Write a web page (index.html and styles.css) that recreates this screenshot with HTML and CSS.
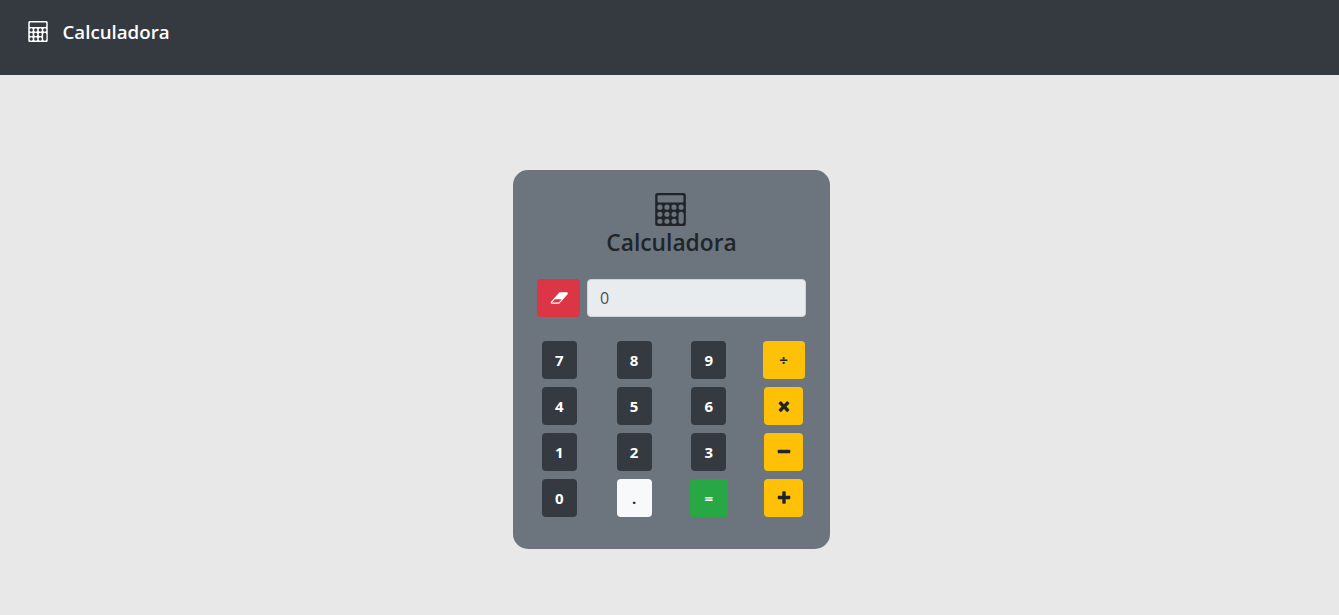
FILE: index.html
```html
<!DOCTYPE html>
<html lang="es">
<head>
<meta charset="utf-8">
<title>Calculadora</title>
<link rel="stylesheet" href="styles.css">
</head>
<body>
<svg class="sprite" aria-hidden="true">
  <symbol id="calculator" viewBox="0 0 1664 1792">
    <path fill-rule="evenodd" d="M128 0H1536a128 128 0 0 1 128 128V1664a128 128 0 0 1-128 128H128a128 128 0 0 1-128-128V128a128 128 0 0 1 128-128zM192 128a64 64 0 0 0-64 64V448a64 64 0 0 0 64 64H1472a64 64 0 0 0 64-64V192a64 64 0 0 0-64-64z
    M116 768a140 140 0 1 0 280 0a140 140 0 1 0-280 0zM500 768a140 140 0 1 0 280 0a140 140 0 1 0-280 0zM884 768a140 140 0 1 0 280 0a140 140 0 1 0-280 0zM1268 768a140 140 0 1 0 280 0a140 140 0 1 0-280 0z
    M116 1152a140 140 0 1 0 280 0a140 140 0 1 0-280 0zM500 1152a140 140 0 1 0 280 0a140 140 0 1 0-280 0zM884 1152a140 140 0 1 0 280 0a140 140 0 1 0-280 0z
    M116 1536a140 140 0 1 0 280 0a140 140 0 1 0-280 0zM500 1536a140 140 0 1 0 280 0a140 140 0 1 0-280 0zM884 1536a140 140 0 1 0 280 0a140 140 0 1 0-280 0z
    M1268 1152V1536a140 140 0 1 0 280 0V1152a140 140 0 1 0-280 0z"/>
  </symbol>
</svg>
<header class="navbar">
  <svg class="navbar-icon"><use href="#calculator"/></svg>
  <span class="navbar-title">Calculadora</span>
</header>
<main class="card">
  <svg class="card-icon"><use href="#calculator"/></svg>
  <h1 class="card-title">Calculadora</h1>
  <div class="display">
    <button class="btn clear" aria-label="Borrar">
      <svg class="eraser" viewBox="0 0 1984 1792"><path d="M960 1408l336-384h-768l-336 384h768zm1013-1077q15 34 9.500 71.500t-30.500 65.500l-896 1024q-38 44-96 44h-768q-38 0-69.500-20.500t-47.500-54.500q-15-34-9.500-71.500t30.500-65.500l896-1024q38-44 96-44h768q38 0 69.500 20.500t47.500 54.500z"/></svg>
    </button>
    <div class="screen">0</div>
  </div>
  <div class="keys">
    <button class="btn dark">7</button>
    <button class="btn dark">8</button>
    <button class="btn dark">9</button>
    <button class="btn operator divide">÷</button>
    <button class="btn dark">4</button>
    <button class="btn dark">5</button>
    <button class="btn dark">6</button>
    <button class="btn operator" aria-label="Multiplicar"><svg class="op-icon" viewBox="0 0 1792 1792"><path d="M1490 1322q0 40-28 68l-136 136q-28 28-68 28t-68-28l-294-294-294 294q-28 28-68 28t-68-28l-136-136q-28-28-28-68t28-68l294-294-294-294q-28-28-28-68t28-68l136-136q28-28 68-28t68 28l294 294 294-294q28-28 68-28t68 28l136 136q28 28 28 68t-28 68l-294 294 294 294q28 28 28 68z"/></svg></button>
    <button class="btn dark">1</button>
    <button class="btn dark">2</button>
    <button class="btn dark">3</button>
    <button class="btn operator" aria-label="Restar"><svg class="op-icon" viewBox="0 0 1792 1792"><path d="M1600 736v192q0 40-28 68t-68 28h-1216q-40 0-68-28t-28-68v-192q0-40 28-68t68-28h1216q40 0 68 28t28 68z"/></svg></button>
    <button class="btn dark">0</button>
    <button class="btn light">.</button>
    <button class="btn equals">=</button>
    <button class="btn operator" aria-label="Sumar"><svg class="op-icon" viewBox="0 0 1792 1792"><path d="M1600 736v192q0 40-28 68t-68 28h-416v416q0 40-28 68t-68 28h-192q-40 0-68-28t-28-68v-416h-416q-40 0-68-28t-28-68v-192q0-40 28-68t68-28h416v-416q0-40 28-68t68-28h192q40 0 68 28t28 68v416h416q40 0 68 28t28 68z"/></svg></button>
  </div>
</main>
</body>
</html>
```
FILE: styles.css
```css
* { box-sizing: border-box; }
body {
  margin: 0;
  height: 615px;
  overflow: hidden;
  background: #e8e8e8;
  color: #212529;
  font: 400 16px/1.5 "Open Sans", "Noto Sans", sans-serif;
}
svg { display: block; fill: currentColor; }
.sprite { display: none; }
.navbar {
  display: flex;
  align-items: flex-start;
  height: 75px;
  padding: 17px 28px;
  background: #343a40;
  color: #fff;
}
.navbar-icon { width: 20px; height: 21px; margin: 4px 14.5px 0 0; }
.navbar-title { font-size: 18.7px; font-weight: 600; line-height: 30px; }
.card {
  width: 317px;
  height: 379px;
  margin: 95px 0 0 513px;
  padding: 23px 9px 0;
  border-radius: 15px;
  background: #6c757d;
}
.card-icon { width: 31px; height: 33px; margin: 0 auto 0 133px; }
.card-title {
  margin: 2px 0 0;
  font-size: 22.8px;
  font-weight: 550;
  line-height: 29px;
  text-align: center;
}
.display { display: flex; gap: 7px; margin: 22px 15px 24px; }
.btn {
  display: flex;
  align-items: center;
  justify-content: center;
  width: 35px;
  height: 38px;
  padding: 0;
  border: 0;
  border-radius: 4px;
  font: 700 15px/24px "Open Sans", "Noto Sans", sans-serif;
}
.clear { width: 43px; background: #dc3545; color: #fff; }
.eraser { width: 18px; height: 16px; }
.screen {
  flex: 1;
  height: 38px;
  padding: 6px 12px;
  border: 1px solid #ced4da;
  border-radius: 4px;
  background: #e9ecef;
  color: #495057;
}
.keys {
  display: grid;
  grid-template-columns: repeat(4, 1fr);
  row-gap: 8px;
  justify-items: center;
}
.dark { background: #343a40; color: #fff; }
.light { background: #f8f9fa; color: #212529; }
.equals { width: 38px; background: #28a745; color: #fff; }
.operator { width: 39px; background: #ffc107; color: #212529; }
.divide { width: 42px; }
.op-icon { width: 16px; height: 16px; }
```
